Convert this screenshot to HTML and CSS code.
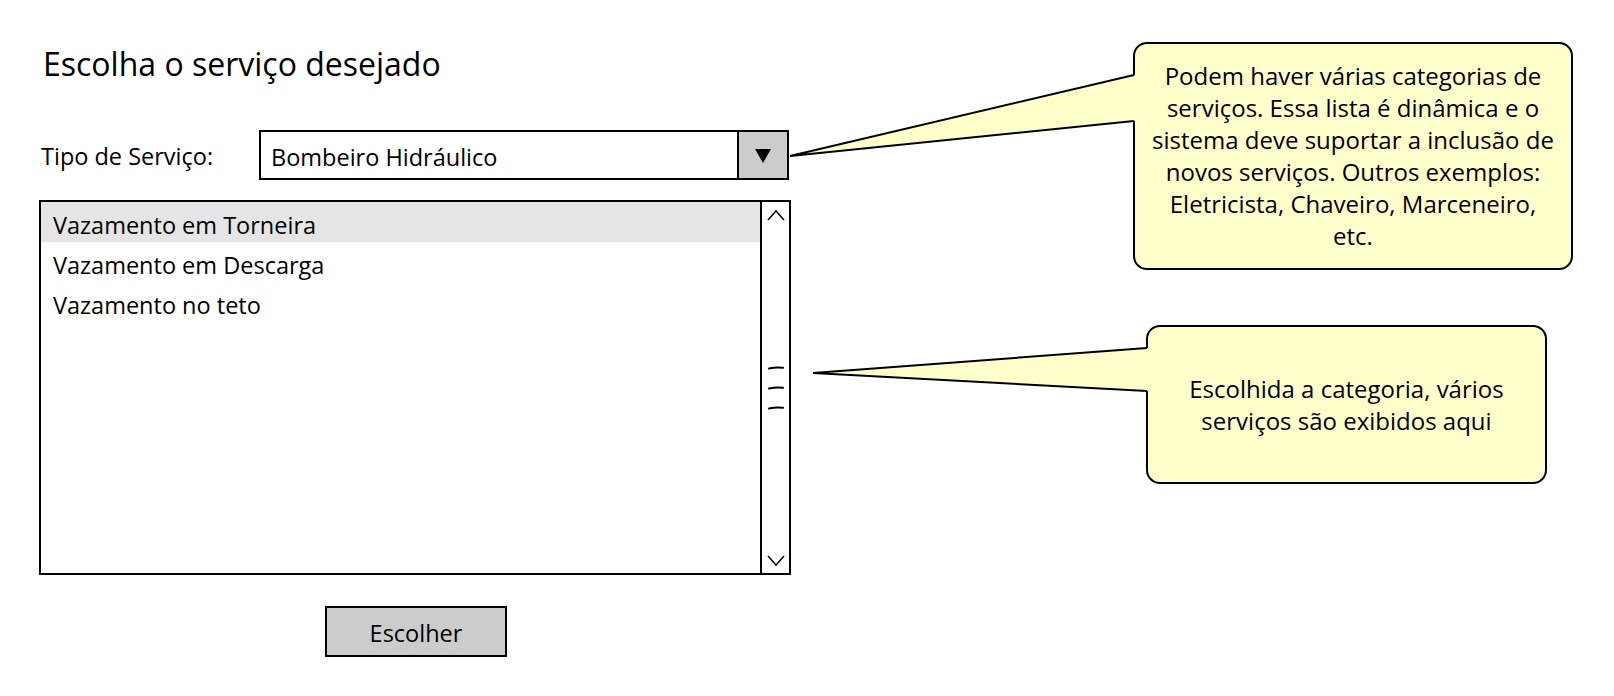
FILE: index.html
```html
<!DOCTYPE html>
<html lang="pt-BR">
<head>
<meta charset="utf-8">
<title>Escolha o serviço desejado</title>
<link rel="stylesheet" href="styles.css">
</head>
<body>
<main class="page">
  <h1 class="title">Escolha o serviço desejado</h1>
  <div class="row">
    <label class="label">Tipo de Serviço:</label>
    <div class="select">
      <span class="select-text">Bombeiro Hidráulico</span>
      <span class="select-btn">
        <svg width="16" height="15" viewBox="0 0 16 15"><polygon points="0,0 16,0 8,14" fill="#000"/></svg>
      </span>
    </div>
  </div>
  <div class="list">
    <ul class="items">
      <li class="item selected">Vazamento em Torneira</li>
      <li class="item">Vazamento em Descarga</li>
      <li class="item">Vazamento no teto</li>
    </ul>
    <div class="scrollbar">
      <svg class="chev" width="18" height="12" viewBox="0 0 18 12"><polyline points="1,11 9,2 17,11" fill="none" stroke="#000" stroke-width="1.5"/></svg>
      <svg class="thumb" width="20" height="46" viewBox="0 0 20 46">
        <path d="M3 3.5 Q10 1.8 17 2.8" fill="none" stroke="#000" stroke-width="2" stroke-linecap="round"/>
        <path d="M3 23.5 Q10 21.8 17 22.8" fill="none" stroke="#000" stroke-width="2" stroke-linecap="round"/>
        <path d="M3 43.5 Q10 41.8 17 42.8" fill="none" stroke="#000" stroke-width="2" stroke-linecap="round"/>
      </svg>
      <svg class="chev" width="18" height="12" viewBox="0 0 18 12"><polyline points="1,1 9,10 17,1" fill="none" stroke="#000" stroke-width="1.5"/></svg>
    </div>
  </div>
  <div class="actions">
    <button class="btn" type="button">Escolher</button>
  </div>
</main>

<div class="callout c1">
  <p class="callout-text">Podem haver várias categorias de<br>serviços. Essa lista é dinâmica e o<br>sistema deve suportar a inclusão de<br>novos serviços. Outros exemplos:<br>Eletricista, Chaveiro, Marceneiro,<br>etc.</p>
</div>
<div class="callout c2">
  <p class="callout-text">Escolhida a categoria, vários<br>serviços são exibidos aqui</p>
</div>

<svg class="tails" width="1614" height="696" viewBox="0 0 1614 696">
  <polygon points="1138,76 1134,75 790,156 1134,121 1138,120" fill="#ffffcc"/>
  <polyline points="1134,75 790,156 1134,121" fill="none" stroke="#000" stroke-width="2" stroke-linejoin="miter"/>
  <polygon points="1151,349 1147,348 813,373 1147,391 1151,390" fill="#ffffcc"/>
  <polyline points="1147,348 813,373 1147,391" fill="none" stroke="#000" stroke-width="2" stroke-linejoin="miter"/>
</svg>
</body>
</html>
```
FILE: styles.css
```css
html, body {
  margin: 0;
  padding: 0;
}

body {
  position: relative;
  width: 1614px;
  height: 696px;
  overflow: hidden;
  background: #fff;
  color: #000;
  font-family: "Open Sans", "Noto Sans", sans-serif;
  font-size: 23.5px;
  line-height: 32px;
}

.page {
  padding-left: 39px;
}

.title {
  margin: 44px 0 0 4px;
  font-size: 32px;
  line-height: 40px;
  font-weight: 400;
}

.row {
  display: flex;
  align-items: center;
  margin-top: 46px;
}

.label {
  width: 220px;
  padding-top: 1px;
  padding-left: 2px;
  box-sizing: border-box;
}

.select {
  display: flex;
  width: 530px;
  height: 50px;
  box-sizing: border-box;
  border: 2px solid #000;
  background: #fff;
}

.select-text {
  flex: 1;
  display: flex;
  align-items: center;
  padding: 3px 0 0 10px;
}

.select-btn {
  width: 50px;
  box-sizing: border-box;
  border-left: 2px solid #000;
  background: #cccccc;
  display: flex;
  align-items: center;
  justify-content: center;
  padding-top: 2px;
}

.list {
  display: flex;
  margin-top: 20px;
  width: 752px;
  height: 375px;
  box-sizing: border-box;
  border: 2px solid #000;
}

.items {
  flex: 1;
  list-style: none;
  margin: 0;
  padding: 0;
}

.item {
  height: 40px;
  box-sizing: border-box;
  padding: 7px 0 0 12px;
}

.item.selected {
  background: #e5e5e5;
}

.scrollbar {
  width: 29px;
  box-sizing: border-box;
  border-left: 2px solid #000;
  display: flex;
  flex-direction: column;
  align-items: center;
  justify-content: space-between;
  padding: 7px 0 6px;
}

.actions {
  margin-top: 31px;
  padding-left: 286px;
}

.btn {
  width: 182px;
  height: 51px;
  box-sizing: border-box;
  border: 2px solid #000;
  background: #cccccc;
  color: #000;
  font: inherit;
  padding: 2px 0 0;
  margin: 0;
}

.callout {
  position: absolute;
  box-sizing: border-box;
  display: flex;
  align-items: center;
  justify-content: center;
  border: 2px solid #000;
  border-radius: 14px;
  background: #ffffcc;
  text-align: center;
  font-size: 24px;
  line-height: 32px;
}

.callout-text {
  margin: 0;
  white-space: nowrap;
}

.c1 {
  left: 1133px;
  top: 42px;
  width: 440px;
  height: 228px;
}

.c2 {
  left: 1146px;
  top: 325px;
  width: 401px;
  height: 159px;
}

.tails {
  position: absolute;
  left: 0;
  top: 0;
  pointer-events: none;
}
```
